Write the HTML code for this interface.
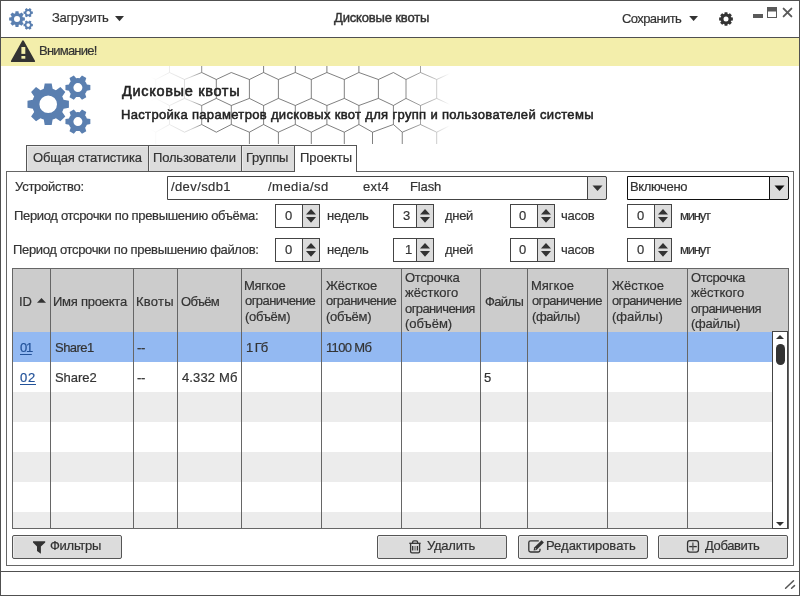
<!DOCTYPE html>
<html><head><meta charset="utf-8">
<style>
*{box-sizing:border-box;margin:0;padding:0}
html,body{width:800px;height:596px;overflow:hidden;background:#fff}
body{position:relative;font-family:"Liberation Sans",sans-serif;font-size:13px;color:#333}
.a{position:absolute}
.t{position:absolute;white-space:nowrap;line-height:20px;height:20px;will-change:transform;-webkit-text-stroke:0.2px #333}
svg{position:absolute;left:0;top:0}
</style></head><body>
<div class="a" style="left:0px;top:0px;width:800px;height:596px;border:1px solid #505050"></div>
<div class="a" style="left:0px;top:37px;width:800px;height:1px;background:#505050"></div>
<div class="a" style="left:1px;top:38px;width:798px;height:28px;background:#f3eeab"></div>
<div class="a" style="left:0px;top:571px;width:800px;height:1px;background:#505050"></div>
<svg width="800" height="596" style="position:absolute;left:0;top:0"><defs><linearGradient id="hg" x1="0" y1="0" x2="800" y2="0" gradientUnits="userSpaceOnUse"><stop offset="0.1875" stop-color="#fff" stop-opacity="0"/><stop offset="0.2375" stop-color="#fff" stop-opacity="0.3"/><stop offset="0.255" stop-color="#fff" stop-opacity="1"/><stop offset="0.50" stop-color="#fff" stop-opacity="1"/><stop offset="0.5375" stop-color="#fff" stop-opacity="0.6"/><stop offset="0.5625" stop-color="#fff" stop-opacity="0"/></linearGradient><mask id="hm"><rect x="0" y="0" width="800" height="596" fill="url(#hg)"/></mask><clipPath id="hc"><rect x="100" y="66" width="400" height="78"/></clipPath></defs><g clip-path="url(#hc)" mask="url(#hm)"><path d="M141,60 L141,72.5 M141,105.5 L141,124.5 M169.5,60 L169.5,72.5 M169.5,105.5 L169.5,124.5 M201.7,60 L201.7,72.5 M201.7,105.5 L201.7,124.5 M231.3,105.5 L231.3,124.5 M263.6,60 L263.6,72.5 M263.6,105.5 L263.6,124.5 M295.3,60 L295.3,72.5 M295.3,105.5 L295.3,124.5 M326.9,60 L326.9,72.5 M326.9,105.5 L326.9,124.5 M358.9,60 L358.9,72.5 M358.9,105.5 L358.9,124.5 M393.4,105.5 L393.4,124.5 M420.5,60 L420.5,72.5 M420.5,105.5 L420.5,124.5 M452,60 L452,72.5 M452,105.5 L452,124.5 M155.75,79.5 L155.75,98.4 M155.75,132.2 L155.75,151 M184.5,79.5 L184.5,98.4 M216.3,79.5 L216.3,98.4 M249.4,79.5 L249.4,98.4 M249.4,132.2 L249.4,151 M278.4,79.5 L278.4,98.4 M278.4,132.2 L278.4,151 M311.3,79.5 L311.3,98.4 M311.3,132.2 L311.3,151 M344.3,79.5 L344.3,98.4 M344.3,132.2 L344.3,151 M378.4,79.5 L378.4,98.4 M372.5,132.2 L372.5,151 M406,79.5 L406,98.4 M402.25,132.2 L402.25,151 M436.7,79.5 L436.7,98.4 M436.7,132.2 L436.7,151 M467,79.5 L467,98.4 M467,132.2 L467,151 M141,72.5 L155.75,79.5 M155.75,98.4 L141,105.5 M141,124.5 L155.75,132.2 M155.75,79.5 L169.5,72.5 M155.75,98.4 L169.5,105.5 M155.75,132.2 L169.5,124.5 M169.5,72.5 L184.5,79.5 M184.5,98.4 L169.5,105.5 M169.5,124.5 L184.5,132.2 M184.5,79.5 L201.7,72.5 M184.5,98.4 L201.7,105.5 M184.5,132.2 L201.7,124.5 M201.7,72.5 L216.3,79.5 M216.3,98.4 L201.7,105.5 M201.7,124.5 L216.3,132.2 M216.3,79.5 L231.3,72.5 M216.3,98.4 L231.3,105.5 M216.3,132.2 L231.3,124.5 M231.3,72.5 L249.4,79.5 M249.4,98.4 L231.3,105.5 M231.3,124.5 L249.4,132.2 M249.4,79.5 L263.6,72.5 M249.4,98.4 L263.6,105.5 M249.4,132.2 L263.6,124.5 M263.6,72.5 L278.4,79.5 M278.4,98.4 L263.6,105.5 M263.6,124.5 L278.4,132.2 M278.4,79.5 L295.3,72.5 M278.4,98.4 L295.3,105.5 M278.4,132.2 L295.3,124.5 M295.3,72.5 L311.3,79.5 M311.3,98.4 L295.3,105.5 M295.3,124.5 L311.3,132.2 M311.3,79.5 L326.9,72.5 M311.3,98.4 L326.9,105.5 M311.3,132.2 L326.9,124.5 M326.9,72.5 L344.3,79.5 M344.3,98.4 L326.9,105.5 M326.9,124.5 L344.3,132.2 M344.3,79.5 L358.9,72.5 M344.3,98.4 L358.9,105.5 M344.3,132.2 L358.9,124.5 M358.9,72.5 L378.4,79.5 M378.4,98.4 L358.9,105.5 M358.9,124.5 L372.5,132.2 M378.4,79.5 L393.4,72.5 M378.4,98.4 L393.4,105.5 M372.5,132.2 L393.4,124.5 M393.4,72.5 L406,79.5 M406,98.4 L393.4,105.5 M393.4,124.5 L402.25,132.2 M406,79.5 L420.5,72.5 M406,98.4 L420.5,105.5 M402.25,132.2 L420.5,124.5 M420.5,72.5 L436.7,79.5 M436.7,98.4 L420.5,105.5 M420.5,124.5 L436.7,132.2 M436.7,79.5 L452,72.5 M436.7,98.4 L452,105.5 M436.7,132.2 L452,124.5 M452,72.5 L467,79.5 M467,98.4 L452,105.5 M452,124.5 L467,132.2" stroke="#555" stroke-width="1" fill="none" opacity="0.75"/></g></svg>
<div class="a" style="left:6px;top:171px;width:788px;height:395px;border:1px solid #666"></div>
<div class="a" style="left:26px;top:145px;width:123px;height:27px;background:#dcdcdc;border:1px solid #555;box-shadow:inset 1px 1px #ebebeb;"></div>
<div class="a" style="left:148px;top:145px;width:94px;height:27px;background:#dcdcdc;border:1px solid #555;box-shadow:inset 1px 1px #ebebeb;"></div>
<div class="a" style="left:241px;top:145px;width:54px;height:27px;background:#dcdcdc;border:1px solid #555;box-shadow:inset 1px 1px #ebebeb;"></div>
<div class="a" style="left:294px;top:145px;width:63px;height:27px;background:#fff;border:1px solid #555;border-bottom:none;"></div>
<div class="a" style="left:167px;top:176px;width:440px;height:24px;border:1px solid #444;border-radius:0 2px 2px 0;background:#fff"></div>
<div class="a" style="left:587px;top:176px;width:20px;height:24px;border:1px solid #444;border-radius:0 2px 2px 0;background:#dcdcdc"></div>
<div class="a" style="left:627px;top:176px;width:162px;height:24px;border:1.3px solid #111;border-radius:0 2px 2px 0;background:#fff"></div>
<div class="a" style="left:769px;top:176px;width:20px;height:24px;border:1.3px solid #111;border-radius:0 2px 2px 0;background:#dcdcdc"></div>
<div class="a" style="left:275px;top:204px;width:45px;height:24px;border:1px solid #444;background:#fff"></div>
<div class="a" style="left:302px;top:204px;width:18px;height:24px;border:1px solid #444;background:#dcdcdc"></div>
<div class="a" style="left:393px;top:204px;width:41px;height:24px;border:1px solid #444;background:#fff"></div>
<div class="a" style="left:416px;top:204px;width:18px;height:24px;border:1px solid #444;background:#dcdcdc"></div>
<div class="a" style="left:510px;top:204px;width:45px;height:24px;border:1px solid #444;background:#fff"></div>
<div class="a" style="left:537px;top:204px;width:18px;height:24px;border:1px solid #444;background:#dcdcdc"></div>
<div class="a" style="left:627px;top:204px;width:45px;height:24px;border:1px solid #444;background:#fff"></div>
<div class="a" style="left:654px;top:204px;width:18px;height:24px;border:1px solid #444;background:#dcdcdc"></div>
<div class="a" style="left:275px;top:238px;width:45px;height:24px;border:1px solid #444;background:#fff"></div>
<div class="a" style="left:302px;top:238px;width:18px;height:24px;border:1px solid #444;background:#dcdcdc"></div>
<div class="a" style="left:393px;top:238px;width:41px;height:24px;border:1px solid #444;background:#fff"></div>
<div class="a" style="left:416px;top:238px;width:18px;height:24px;border:1px solid #444;background:#dcdcdc"></div>
<div class="a" style="left:510px;top:238px;width:45px;height:24px;border:1px solid #444;background:#fff"></div>
<div class="a" style="left:537px;top:238px;width:18px;height:24px;border:1px solid #444;background:#dcdcdc"></div>
<div class="a" style="left:627px;top:238px;width:45px;height:24px;border:1px solid #444;background:#fff"></div>
<div class="a" style="left:654px;top:238px;width:18px;height:24px;border:1px solid #444;background:#dcdcdc"></div>
<div class="a" style="left:12px;top:268px;width:777px;height:261px;border:1px solid #666;background:#fff"></div>
<div class="a" style="left:13px;top:269px;width:775px;height:63px;background:#ccc"></div>
<div class="a" style="left:13px;top:332px;width:759px;height:30px;background:#93b9f2"></div>
<div class="a" style="left:13px;top:392px;width:759px;height:30px;background:#ececec"></div>
<div class="a" style="left:13px;top:452px;width:759px;height:30px;background:#ececec"></div>
<div class="a" style="left:13px;top:512px;width:759px;height:16px;background:#ececec"></div>
<div class="a" style="left:50px;top:269px;width:1px;height:259px;background:#666"></div>
<div class="a" style="left:133px;top:269px;width:1px;height:259px;background:#666"></div>
<div class="a" style="left:177px;top:269px;width:1px;height:259px;background:#666"></div>
<div class="a" style="left:241px;top:269px;width:1px;height:259px;background:#666"></div>
<div class="a" style="left:321px;top:269px;width:1px;height:259px;background:#666"></div>
<div class="a" style="left:401px;top:269px;width:1px;height:259px;background:#666"></div>
<div class="a" style="left:480px;top:269px;width:1px;height:259px;background:#666"></div>
<div class="a" style="left:527px;top:269px;width:1px;height:259px;background:#666"></div>
<div class="a" style="left:607px;top:269px;width:1px;height:259px;background:#666"></div>
<div class="a" style="left:687px;top:269px;width:1px;height:259px;background:#666"></div>
<div class="a" style="left:772px;top:331px;width:16px;height:198px;border:1px solid #444;background:#fff"></div>
<div class="a" style="left:776px;top:344px;width:9px;height:21px;background:#333;border-radius:4.5px"></div>
<div class="a" style="left:12px;top:535px;width:110px;height:24px;border:1px solid #555;border-radius:2px;background:#dcdcdc;box-shadow:inset 1px 1px #ebebeb"></div>
<div class="a" style="left:377px;top:535px;width:130px;height:24px;border:1px solid #555;border-radius:2px;background:#dcdcdc;box-shadow:inset 1px 1px #ebebeb"></div>
<div class="a" style="left:518px;top:535px;width:130px;height:24px;border:1px solid #555;border-radius:2px;background:#dcdcdc;box-shadow:inset 1px 1px #ebebeb"></div>
<div class="a" style="left:658px;top:535px;width:130px;height:24px;border:1px solid #555;border-radius:2px;background:#dcdcdc;box-shadow:inset 1px 1px #ebebeb"></div>
<div class="t" style="left:51.50px;top:8px;letter-spacing:-0.32px;">Загрузить</div>
<div class="t" style="left:334.30px;top:8px;letter-spacing:-0.16px;-webkit-text-stroke:0.45px #333;">Дисковые квоты</div>
<div class="t" style="left:621.90px;top:9px;letter-spacing:-0.59px;">Сохранить</div>
<div class="t" style="left:38.60px;top:41px;letter-spacing:-0.79px;">Внимание!</div>
<div class="t" style="left:121.50px;top:81px;font-size:14.5px;letter-spacing:0.69px;color:#222;-webkit-text-stroke:0.55px #222;">Дисковые квоты</div>
<div class="t" style="left:120.50px;top:105px;letter-spacing:0.33px;color:#222;-webkit-text-stroke:0.5px #222;">Настройка параметров дисковых квот для групп и пользователей системы</div>
<div class="t" style="left:32.50px;top:148px;letter-spacing:-0.17px;">Общая статистика</div>
<div class="t" style="left:153.00px;top:148px;letter-spacing:-0.17px;">Пользователи</div>
<div class="t" style="left:246.00px;top:148px;letter-spacing:-0.19px;">Группы</div>
<div class="t" style="left:299.60px;top:148px;letter-spacing:-0.02px;">Проекты</div>
<div class="t" style="left:14.50px;top:177px;letter-spacing:-0.25px;">Устройство:</div>
<div class="t" style="left:171.20px;top:177px;letter-spacing:0.39px;">/dev/sdb1</div>
<div class="t" style="left:267.60px;top:177px;letter-spacing:0.48px;">/media/sd</div>
<div class="t" style="left:363.20px;top:177px;letter-spacing:0.39px;">ext4</div>
<div class="t" style="left:410.20px;top:177px;letter-spacing:-0.14px;">Flash</div>
<div class="t" style="left:630.25px;top:177px;letter-spacing:-0.36px;">Включено</div>
<div class="t" style="left:13.75px;top:206px;letter-spacing:-0.33px;">Период отсрочки по превышению объёма:</div>
<div class="t" style="left:13.40px;top:240px;letter-spacing:-0.33px;">Период отсрочки по превышению файлов:</div>
<div class="t" style="left:326.70px;top:206px;letter-spacing:-0.22px;">недель</div>
<div class="t" style="left:444.90px;top:206px;letter-spacing:-0.30px;">дней</div>
<div class="t" style="left:561.00px;top:206px;letter-spacing:-0.27px;">часов</div>
<div class="t" style="left:679.50px;top:206px;letter-spacing:-1.22px;">минут</div>
<div class="t" style="left:284.60px;top:206px;">0</div>
<div class="t" style="left:402.60px;top:206px;">3</div>
<div class="t" style="left:518.70px;top:206px;">0</div>
<div class="t" style="left:636.60px;top:206px;">0</div>
<div class="t" style="left:326.70px;top:240px;letter-spacing:-0.22px;">недель</div>
<div class="t" style="left:444.90px;top:240px;letter-spacing:-0.30px;">дней</div>
<div class="t" style="left:561.00px;top:240px;letter-spacing:-0.27px;">часов</div>
<div class="t" style="left:679.50px;top:240px;letter-spacing:-1.22px;">минут</div>
<div class="t" style="left:284.60px;top:240px;">0</div>
<div class="t" style="left:405.00px;top:240px;">1</div>
<div class="t" style="left:518.70px;top:240px;">0</div>
<div class="t" style="left:636.60px;top:240px;">0</div>
<div class="t" style="left:18.60px;top:292px;">ID</div>
<div class="t" style="left:53.30px;top:292px;letter-spacing:-0.24px;">Имя проекта</div>
<div class="t" style="left:135.90px;top:292px;letter-spacing:0.27px;">Квоты</div>
<div class="t" style="left:180.70px;top:292px;letter-spacing:-0.70px;">Объём</div>
<div class="t" style="left:484.90px;top:292px;letter-spacing:-0.62px;">Файлы</div>
<div class="t" style="left:244.30px;top:276px;letter-spacing:-0.25px;">Мягкое</div>
<div class="t" style="left:245.30px;top:291px;letter-spacing:-0.57px;">ограничение</div>
<div class="t" style="left:245.30px;top:307px;letter-spacing:-0.29px;">(объём)</div>
<div class="t" style="left:325.60px;top:276px;letter-spacing:-0.13px;">Жёсткое</div>
<div class="t" style="left:325.60px;top:291px;letter-spacing:-0.57px;">ограничение</div>
<div class="t" style="left:325.60px;top:307px;letter-spacing:-0.29px;">(объём)</div>
<div class="t" style="left:405.25px;top:268px;letter-spacing:-0.27px;">Отсрочка</div>
<div class="t" style="left:405.25px;top:283px;">жёсткого</div>
<div class="t" style="left:405.25px;top:299px;letter-spacing:-0.60px;">ограничения</div>
<div class="t" style="left:405.25px;top:314px;">(объём)</div>
<div class="t" style="left:530.60px;top:276px;">Мягкое</div>
<div class="t" style="left:531.60px;top:291px;letter-spacing:-0.61px;">ограничение</div>
<div class="t" style="left:531.60px;top:307px;letter-spacing:-0.39px;">(файлы)</div>
<div class="t" style="left:611.80px;top:276px;">Жёсткое</div>
<div class="t" style="left:611.80px;top:291px;letter-spacing:-0.64px;">ограничение</div>
<div class="t" style="left:611.80px;top:307px;">(файлы)</div>
<div class="t" style="left:691.30px;top:268px;letter-spacing:-0.33px;">Отсрочка</div>
<div class="t" style="left:691.30px;top:283px;">жёсткого</div>
<div class="t" style="left:691.30px;top:299px;letter-spacing:-0.58px;">ограничения</div>
<div class="t" style="left:691.30px;top:314px;letter-spacing:-0.24px;">(файлы)</div>
<div class="t" style="left:19.50px;top:338px;letter-spacing:-1.33px;color:#235299;-webkit-text-stroke:0.2px #235299;text-decoration:underline;text-underline-offset:2px;">01</div>
<div class="t" style="left:54.60px;top:338px;letter-spacing:-0.54px;">Share1</div>
<div class="t" style="left:137.40px;top:338px;letter-spacing:-0.23px;">--</div>
<div class="t" style="left:245.60px;top:338px;letter-spacing:-1.03px;">1 Гб</div>
<div class="t" style="left:326.00px;top:338px;letter-spacing:-0.67px;">1100 Мб</div>
<div class="t" style="left:19.50px;top:368px;letter-spacing:0.77px;color:#235299;-webkit-text-stroke:0.2px #235299;text-decoration:underline;text-underline-offset:2px;">02</div>
<div class="t" style="left:54.60px;top:368px;letter-spacing:-0.06px;">Share2</div>
<div class="t" style="left:137.40px;top:368px;letter-spacing:-0.23px;">--</div>
<div class="t" style="left:181.50px;top:368px;letter-spacing:0.13px;">4.332 Мб</div>
<div class="t" style="left:484.00px;top:368px;">5</div>
<div class="t" style="left:50.20px;top:536px;letter-spacing:-0.28px;">Фильтры</div>
<div class="t" style="left:426.50px;top:536px;letter-spacing:-0.23px;">Удалить</div>
<div class="t" style="left:545.90px;top:536px;">Редактировать</div>
<div class="t" style="left:704.70px;top:536px;letter-spacing:-0.38px;">Добавить</div>
<svg width="800" height="596"><path d="M37,302.8 L41.5,298 L46,302.8Z" fill="#333"/><path d="M776,339 L780,335 L784,339Z M776,522 L780,526 L784,522Z" fill="#333"/><path d="M115,16 L124,16 L119.5,21.3Z" fill="#333"/><path d="M689.2,15.9 L698,15.9 L693.6,21Z" fill="#333"/><path d="M592.5,185.5 L602.5,185.5 L597.5,191Z" fill="#333"/><path d="M774.5,185.5 L784.5,185.5 L779.5,191Z" fill="#111"/><path d="M306,214.5 L311.0,209 L316,214.5Z M306,217 L311.0,222.8 L316,217Z" fill="#333"/><path d="M420,214.5 L425.0,209 L430,214.5Z M420,217 L425.0,222.8 L430,217Z" fill="#333"/><path d="M541,214.5 L546.0,209 L551,214.5Z M541,217 L546.0,222.8 L551,217Z" fill="#333"/><path d="M658,214.5 L663.0,209 L668,214.5Z M658,217 L663.0,222.8 L668,217Z" fill="#333"/><path d="M306,248.5 L311.0,243 L316,248.5Z M306,251 L311.0,256.8 L316,251Z" fill="#333"/><path d="M420,248.5 L425.0,243 L430,248.5Z M420,251 L425.0,256.8 L430,251Z" fill="#333"/><path d="M541,248.5 L546.0,243 L551,248.5Z M541,251 L546.0,256.8 L551,251Z" fill="#333"/><path d="M658,248.5 L663.0,243 L668,248.5Z M658,251 L663.0,256.8 L668,251Z" fill="#333"/><rect x="753" y="14" width="10" height="4" fill="#5a5a5a"/><rect x="767.5" y="7.5" width="9" height="10" fill="#fff" stroke="#5a5a5a" stroke-width="1"/><rect x="767" y="7" width="10" height="4.5" fill="#5a5a5a"/><path d="M783.6,8.6 L791.4,16.4 M791.4,8.6 L783.6,16.4" stroke="#5a5a5a" stroke-width="1.9" stroke-linecap="round"/><path d="M23,41.3 L34.2,61.2 L11.8,61.2Z" fill="#333" stroke="#333" stroke-width="1.8" stroke-linejoin="round"/><rect x="21.4" y="47" width="3.9" height="6.9" fill="#f3eeab"/><rect x="21.4" y="56" width="3.9" height="2.7" fill="#f3eeab"/><path fill-rule="evenodd" fill="#5a7fb0" d="M62.98,98.08 L63.57,99.76 L68.91,100.72 L68.91,107.68 L63.57,108.64 L62.98,110.32 L62.21,111.93 L65.31,116.38 L60.38,121.31 L55.93,118.21 L54.32,118.98 L52.64,119.57 L51.68,124.91 L44.72,124.91 L43.76,119.57 L42.08,118.98 L40.47,118.21 L36.02,121.31 L31.09,116.38 L34.19,111.93 L33.42,110.32 L32.83,108.64 L27.49,107.68 L27.49,100.72 L32.83,99.76 L33.42,98.08 L34.19,96.47 L31.09,92.02 L36.02,87.09 L40.47,90.19 L42.08,89.42 L43.76,88.83 L44.72,83.49 L51.68,83.49 L52.64,88.83 L54.32,89.42 L55.93,90.19 L60.38,87.09 L65.31,92.02 L62.21,96.47Z M57.00,104.20 A8.8,8.8 0 1,0 39.40,104.20 A8.8,8.8 0 1,0 57.00,104.20Z"/><path fill-rule="evenodd" fill="#5a7fb0" d="M86.13,82.85 L86.85,84.41 L90.35,85.12 L90.35,90.08 L86.85,90.79 L86.13,92.35 L85.13,93.76 L86.28,97.14 L81.98,99.63 L79.61,96.94 L77.90,97.10 L76.19,96.94 L73.82,99.63 L69.52,97.14 L70.67,93.76 L69.67,92.35 L68.95,90.79 L65.45,90.08 L65.45,85.12 L68.95,84.41 L69.67,82.85 L70.67,81.44 L69.52,78.06 L73.82,75.57 L76.19,78.26 L77.90,78.10 L79.61,78.26 L81.98,75.57 L86.28,78.06 L85.13,81.44Z M82.40,87.60 A4.5,4.5 0 1,0 73.40,87.60 A4.5,4.5 0 1,0 82.40,87.60Z"/><path fill-rule="evenodd" fill="#5a7fb0" d="M86.13,116.85 L86.85,118.41 L90.35,119.12 L90.35,124.08 L86.85,124.79 L86.13,126.35 L85.13,127.76 L86.28,131.14 L81.98,133.63 L79.61,130.94 L77.90,131.10 L76.19,130.94 L73.82,133.63 L69.52,131.14 L70.67,127.76 L69.67,126.35 L68.95,124.79 L65.45,124.08 L65.45,119.12 L68.95,118.41 L69.67,116.85 L70.67,115.44 L69.52,112.06 L73.82,109.57 L76.19,112.26 L77.90,112.10 L79.61,112.26 L81.98,109.57 L86.28,112.06 L85.13,115.44Z M82.40,121.60 A4.5,4.5 0 1,0 73.40,121.60 A4.5,4.5 0 1,0 82.40,121.60Z"/><path fill-rule="evenodd" fill="#5a7fb0" d="M22.54,16.80 L22.73,17.33 L24.86,17.61 L24.86,20.59 L22.73,20.87 L22.54,21.40 L22.31,21.90 L23.61,23.60 L21.50,25.71 L19.80,24.41 L19.30,24.64 L18.77,24.83 L18.49,26.96 L15.51,26.96 L15.23,24.83 L14.70,24.64 L14.20,24.41 L12.50,25.71 L10.39,23.60 L11.69,21.90 L11.46,21.40 L11.27,20.87 L9.14,20.59 L9.14,17.61 L11.27,17.33 L11.46,16.80 L11.69,16.30 L10.39,14.60 L12.50,12.49 L14.20,13.79 L14.70,13.56 L15.23,13.37 L15.51,11.24 L18.49,11.24 L18.77,13.37 L19.30,13.56 L19.80,13.79 L21.50,12.49 L23.61,14.60 L22.31,16.30Z M20.00,19.10 A3,3 0 1,0 14.00,19.10 A3,3 0 1,0 20.00,19.10Z"/><path fill-rule="evenodd" fill="#5a7fb0" d="M31.32,10.90 L31.57,11.43 L32.87,11.61 L32.87,13.79 L31.57,13.97 L31.32,14.50 L30.99,14.98 L31.48,16.20 L29.59,17.29 L28.78,16.25 L28.20,16.30 L27.62,16.25 L26.81,17.29 L24.92,16.20 L25.41,14.98 L25.08,14.50 L24.83,13.97 L23.53,13.79 L23.53,11.61 L24.83,11.43 L25.08,10.90 L25.41,10.42 L24.92,9.20 L26.81,8.11 L27.62,9.15 L28.20,9.10 L28.78,9.15 L29.59,8.11 L31.48,9.20 L30.99,10.42Z M30.00,12.70 A1.8,1.8 0 1,0 26.40,12.70 A1.8,1.8 0 1,0 30.00,12.70Z"/><path fill-rule="evenodd" fill="#5a7fb0" d="M31.32,23.30 L31.57,23.83 L32.87,24.01 L32.87,26.19 L31.57,26.37 L31.32,26.90 L30.99,27.38 L31.48,28.60 L29.59,29.69 L28.78,28.65 L28.20,28.70 L27.62,28.65 L26.81,29.69 L24.92,28.60 L25.41,27.38 L25.08,26.90 L24.83,26.37 L23.53,26.19 L23.53,24.01 L24.83,23.83 L25.08,23.30 L25.41,22.82 L24.92,21.60 L26.81,20.51 L27.62,21.55 L28.20,21.50 L28.78,21.55 L29.59,20.51 L31.48,21.60 L30.99,22.82Z M30.00,25.10 A1.8,1.8 0 1,0 26.40,25.10 A1.8,1.8 0 1,0 30.00,25.10Z"/><path fill-rule="evenodd" fill="#333" d="M730.90,16.97 L731.03,17.33 L732.86,17.61 L732.86,20.39 L731.03,20.67 L730.90,21.03 L730.74,21.37 L731.83,22.87 L729.87,24.83 L728.37,23.74 L728.03,23.90 L727.67,24.03 L727.39,25.86 L724.61,25.86 L724.33,24.03 L723.97,23.90 L723.63,23.74 L722.13,24.83 L720.17,22.87 L721.26,21.37 L721.10,21.03 L720.97,20.67 L719.14,20.39 L719.14,17.61 L720.97,17.33 L721.10,16.97 L721.26,16.63 L720.17,15.13 L722.13,13.17 L723.63,14.26 L723.97,14.10 L724.33,13.97 L724.61,12.14 L727.39,12.14 L727.67,13.97 L728.03,14.10 L728.37,14.26 L729.87,13.17 L731.83,15.13 L730.74,16.63Z M728.50,19.00 A2.5,2.5 0 1,0 723.50,19.00 A2.5,2.5 0 1,0 728.50,19.00Z"/><path d="M33,541.2 L45.2,541.2 L45.2,542.5 L40.9,546.4 L40.9,553.7 L37,551.1 L37,546.4 L33,542.5Z" fill="#333"/><g fill="none" stroke="#333" stroke-width="1.3"><path d="M409.3,543.3 L420.6,543.3"/><path d="M412.6,543.3 L412.6,542.2 Q412.6,540.8 414,540.8 L416.2,540.8 Q417.6,540.8 417.6,542.2 L417.6,543.3"/><path d="M410.6,543.3 L410.6,551.5 Q410.6,552.8 411.9,552.8 L418.3,552.8 Q419.6,552.8 419.6,551.5 L419.6,543.3"/><path d="M412.7,546 L412.7,550.5 M417.4,546 L417.4,550.5"/><path d="M415.05,546 L415.05,550.5" stroke-opacity="0.6"/></g><path d="M538.8,540.8 L530.6,540.8 Q528.8,540.8 528.8,542.6 L528.8,550.2 Q528.8,552 530.6,552 L538.2,552 Q540,552 540,550.2 L540,548.8" fill="none" stroke="#333" stroke-width="1.3"/><path d="M534.2,547.6 L541.6,540.2 L543.9,542.5 L536.5,549.9 L533.6,550.6Z" fill="#333"/><circle cx="535.6" cy="548.8" r="0.6" fill="#ddd"/><rect x="687.55" y="540.65" width="10.9" height="11.5" rx="2.3" fill="none" stroke="#333" stroke-width="1.3"/><path d="M689.2,546.6 L696.8,546.6" stroke="#333" stroke-width="1.3"/><path d="M692.9,542.6 L692.9,550.4" stroke="#555" stroke-width="1.3"/><path d="M785.6,588.3 L793.5,580.7 M791.6,588.3 L794.5,585.6" stroke="#555" stroke-width="1.5" stroke-linecap="round"/></svg>
</body></html>
